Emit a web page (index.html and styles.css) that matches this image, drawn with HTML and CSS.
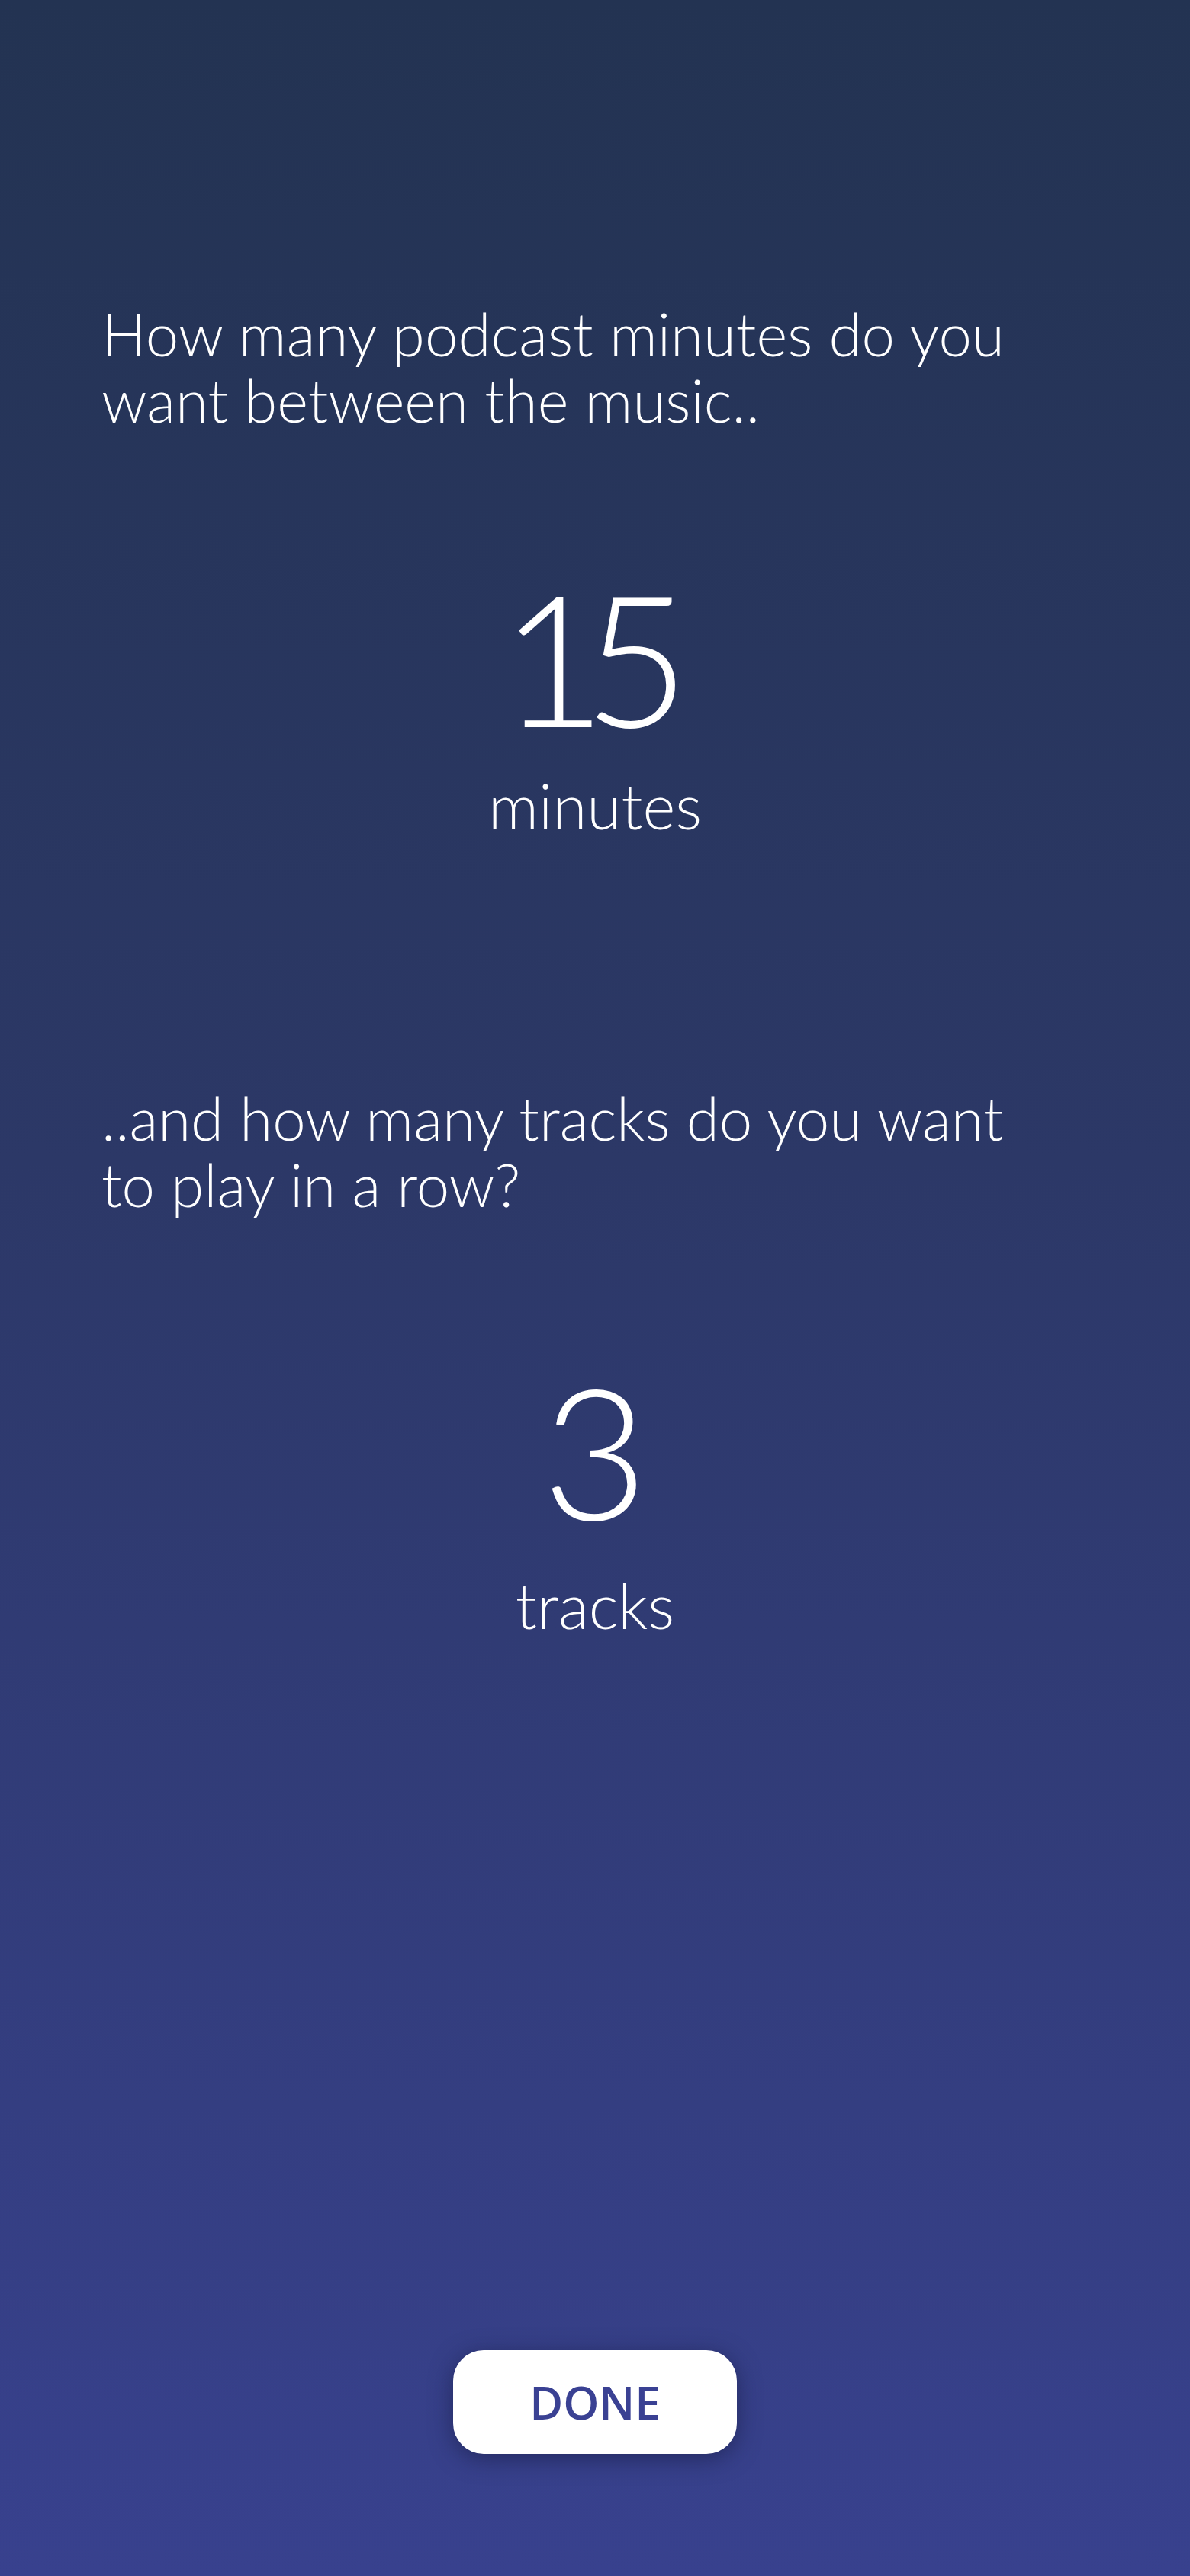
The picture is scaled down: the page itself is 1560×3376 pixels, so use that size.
FILE: index.html
```html
<!DOCTYPE html>
<html lang="en">
<head>
<meta charset="utf-8">
<title>Podcast mix settings</title>
<link rel="stylesheet" href="styles.css">
</head>
<body>
<main class="screen">
  <section class="question q-first">
    <h1 class="prompt">How many podcast minutes do you want between the music..</h1>
    <div class="value">
      <span class="number number-tight">15</span>
      <span class="unit">minutes</span>
    </div>
  </section>
  <section class="question q-second">
    <h1 class="prompt">..and how many tracks do you want to play in a row?</h1>
    <div class="value">
      <span class="number">3</span>
      <span class="unit">tracks</span>
    </div>
  </section>
  <div class="actions">
    <button class="done-btn" type="button">DONE</button>
  </div>
</main>
</body>
</html>
```

FILE: styles.css
```css
html, body {
  margin: 0;
  padding: 0;
}

body {
  width: 1560px;
  height: 3376px;
  background: linear-gradient(180deg, #233352 0%, #2c3867 45%, #38418e 100%);
  font-family: "Lato", "Open Sans", sans-serif;
  color: #ffffff;
}

.screen {
  height: 3376px;
  box-sizing: border-box;
  display: flex;
  flex-direction: column;
  padding: 394px 0 0 0;
}

.question {
  display: flex;
  flex-direction: column;
}

.q-second {
  margin-top: 322px;
}

.prompt {
  margin: 0 167px 0 133px;
  font-weight: 300;
  font-size: 78px;
  line-height: 87px;
  letter-spacing: 0;
}

.value {
  display: flex;
  flex-direction: column;
  align-items: center;
  margin-top: 172px;
}

.q-second .value {
  margin-top: 183px;
}

.number {
  font-weight: 300;
  font-size: 240px;
  line-height: 240px;
}

.number-tight {
  letter-spacing: -30px;
  margin-right: 30px;
}

.unit {
  margin-top: 30px;
  font-weight: 300;
  font-size: 82px;
  line-height: 90px;
}

.q-second .unit {
  margin-top: 39px;
}

.actions {
  margin-top: auto;
  margin-bottom: 160px;
  display: flex;
  justify-content: center;
}

.done-btn {
  width: 372px;
  height: 136px;
  border: none;
  border-radius: 40px;
  background: #ffffff;
  color: #3a4193;
  font-family: "Open Sans", "Lato", sans-serif;
  font-weight: 600;
  font-size: 60px;
  box-shadow: 0 6px 30px rgba(20, 24, 60, 0.55);
  cursor: pointer;
}
```
